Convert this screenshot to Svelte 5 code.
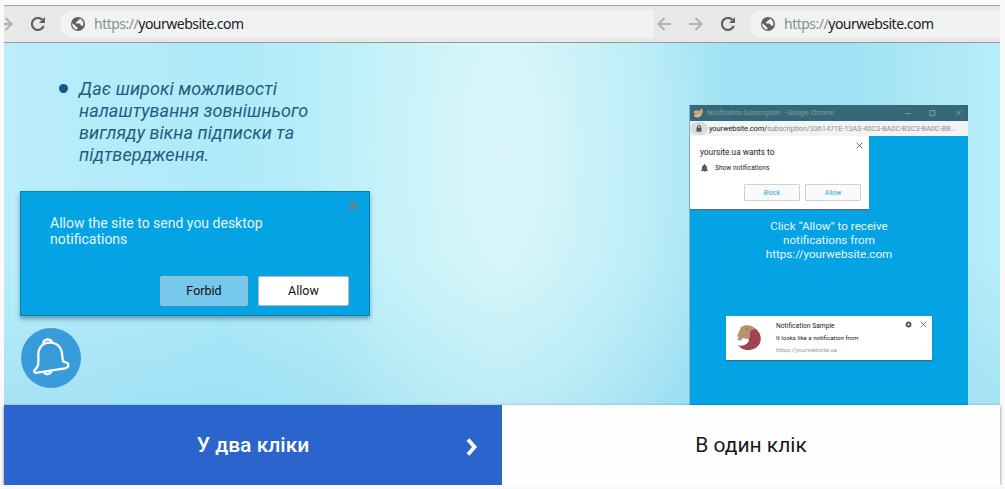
<script>
  const site = "yourwebsite.com";
  let active = "double";
</script>

<div class="widget">
  <div class="bar">
    {#each ["first", "second"] as name}
      <div class="nav {name}">
        {#if name === "second"}
          <svg class="arrow" viewBox="0 0 14 14"><path d="M14 7H1.5M7.5 1L1.5 7l6 6" /></svg>
        {/if}
        <svg class="arrow" viewBox="0 0 14 14"><path d="M0 7h12.5M6.5 1l6 6-6 6" /></svg>
        <svg class="reload" viewBox="0 0 14 14">
          <path d="M12.600 9A6 6 0 1 1 11.300 2.800" />
          <path class="solid" d="M14 0v6H8z" />
        </svg>
        <div class="address">
          <svg class="globe" viewBox="0 0 14 14">
            <circle cx="7" cy="7" r="7" />
            <path d="M8.500 1.500C8.700 3 8 3.300 6.500 3.400c0 1.300-.5 1.500-1.700 1.700-.1.900.2 1.300 1.200 1.300h2.300c1 .1 1.300.8 1.300 1.800.8.100 1.500.3 2 1 1.700-3 .4-6.500-3.100-7.700z" />
            <path d="M1.400 6.200l3.100 2.500c.4 1 .7 1.300 1.800 1.400v2.500C3 12.300.8 9.400 1.400 6.200z" />
          </svg>
          <span class="url"><i>https://</i>{site}</span>
        </div>
      </div>
    {/each}
  </div>

  <div class="stage">
    <div class="left">
      <ul>
        <li>
          Дає широкі можливості<br />налаштування зовнішнього<br />вигляду вікна підписки та<br
          />підтвердження.
        </li>
      </ul>
      <div class="prompt">
        <svg class="close" viewBox="0 0 10 10"><path d="M1 1l8 8M9 1L1 9" /></svg>
        <p>Allow the site to send you desktop<br />notifications</p>
        <div class="actions">
          <button class="forbid">Forbid</button>
          <button>Allow</button>
        </div>
      </div>
      <div class="bell">
        <svg viewBox="0 0 60 60">
          <path d="M15 40.500C13 42 12.500 44.700 15 44.800L44 40.300C48.500 39.500 48.200 35 44.500 34.400C41.500 33.900 41.500 31.500 41.300 28C40.800 20 36.500 14.700 29 14.700C21 14.700 17 20.200 17.300 28C17.500 33 18.300 38 15 40.500Z" />
          <path d="M22.300 15.600C21.500 10.500 31 10 31.300 15M22.800 43.800C24.500 47.500 29.500 46.500 30.500 42.700" />
        </svg>
      </div>
    </div>

    <div class="window">
      <div class="title">
        <svg class="logo" viewBox="0 0 10 10">
          <path d="M0 4l3-2 3 1 3-3 1 4-2 3-3 2-4-1 1-2z" fill="#cda27a" />
          <path d="M1 7l3 .5L9 5 8 8 5 9.500 2 9z" fill="#dfb893" />
        </svg>
        <span>Notification Subscription &nbsp;- Google Chrome</span>
        <svg class="controls" viewBox="0 0 60 8">
          <path d="M1 4.500h6M26 1.500h5v5h-5zM52 1.500l5 5M57 1.500l-5 5" />
        </svg>
      </div>
      <div class="location">
        <span class="lock">
          <svg viewBox="0 0 6 7"><path d="M1.500 3V2a1.500 1.500 0 0 1 3 0v1" /><rect x=".5" y="2.700" width="5" height="4" /></svg>
        </span>
        <span class="path"><b>{site}/</b>subscription/3361471E-13A3-40C3-BA0C-B3C3-BA0C-BB...</span>
      </div>
      <div class="page">
        <div class="permission">
          <svg class="close" viewBox="0 0 10 10"><path d="M1 1l8 8M9 1L1 9" /></svg>
          <h3>yoursite.ua wants to</h3>
          <div class="show">
            <svg viewBox="0 0 7 8"><path d="M3 0h1v1c1.500.4 2 1.500 2 3v1.500l1 1V7H0v-.5l1-1V4c0-1.500.5-2.600 2-3zM2.700 7.300h1.600c0 1-1.600 1-1.600 0z" /></svg>
            <span>Show notifications</span>
          </div>
          <div class="actions">
            <button>Block</button>
            <button>Allow</button>
          </div>
        </div>
        <p class="hint">Click “Allow” to receive<br />notifications from<br />https://{site}</p>
        <div class="sample">
          <svg class="lion" viewBox="0 0 26 27">
            <path d="M15 4l5 1c4 3 6 9 4 14-3 7-13 9-19 5l-3-3c5 2 10-1 11-5l-2-3z" fill="#a04350" />
            <path d="M5 3l5-2 6 1 4 3-5 1-1 3v5l-3 1-4-1-3 3-3-2 2-2-2-1 2-4z" fill="#b7926d" />
            <path d="M10 5.500h2" stroke="#8c5148" />
          </svg>
          <div class="message">
            <h4>Notification Sample</h4>
            <span>It looks like a notification from</span>
            <small>https://yourwebsite.ua</small>
          </div>
          <svg class="gear" viewBox="0 0 7 7"><circle cx="3.500" cy="3.500" r="2" /></svg>
          <svg class="close" viewBox="0 0 10 10"><path d="M1 1l8 8M9 1L1 9" /></svg>
        </div>
      </div>
    </div>
  </div>

  <div class="tabs">
    <div class="tab" class:active={active === "double"} on:click={() => (active = "double")}>
      <span>У два кліки</span>
      {#if active === "double"}
        <svg viewBox="0 0 12 18"><path d="M2 1.500l6.500 7.500L2 16.500" /></svg>
      {/if}
    </div>
    <div class="tab" class:active={active === "single"} on:click={() => (active = "single")}>
      <span>В один клік</span>
    </div>
  </div>
</div>

<style>
  :global(body) {
    background: #fafafa;
    font-family: Roboto, sans-serif;
    overflow: hidden;
  }
  :global(#app) {
    display: flow-root;
  }
  * {
    box-sizing: border-box;
  }
  p, h3, h4, ul {
    margin: 0;
    padding: 0;
    font-weight: 400;
  }
  svg {
    display: block;
    flex: none;
    fill: none;
  }
  button {
    font-family: inherit;
    padding: 0;
    white-space: nowrap;
  }
  .widget {
    width: 996px;
    margin: 5px 0 0 4px;
  }
  .bar {
    display: flex;
    height: 38px;
    background: #e8e8e8;
    border-top: 1px solid #a3a1a3;
    border-bottom: 1px solid #999799;
  }
  .nav {
    display: flex;
    align-items: center;
    overflow: hidden;
  }
  .first {
    width: 650px;
  }
  .first .arrow {
    margin-left: -5px;
  }
  .second {
    width: 346px;
    padding-left: 3px;
  }
  .arrow {
    width: 14px;
    height: 14px;
    margin-right: 18px;
    stroke: #a9b3af;
    stroke-width: 2;
  }
  .reload {
    width: 14px;
    height: 14px;
    margin-right: 15px;
    stroke: #5f6065;
    stroke-width: 2.2;
  }
  .reload .solid {
    fill: #5f6065;
    stroke: none;
  }
  .address {
    flex: 1;
    height: 28px;
    display: flex;
    align-items: center;
    padding-left: 11px;
    background: #f1f3f3;
    border-radius: 14px 0 0 14px;
  }
  .globe {
    width: 14px;
    height: 14px;
    margin-right: 9px;
  }
  .globe circle {
    fill: #5f6065;
  }
  .globe path {
    fill: #f1f3f3;
  }
  .url {
    margin-top: -1px;
    font-family: "Noto Sans", "Open Sans", sans-serif;
    font-size: 14px;
    letter-spacing: -0.5px;
    color: #1a2028;
  }
  .url i {
    font-style: normal;
    color: #84918f;
  }
  .stage {
    position: relative;
    display: flex;
    height: 362px;
    background:
      radial-gradient(ellipse 210px 400px at 505px 110px, rgba(225, 248, 251, 0.7), rgba(215, 247, 250, 0.45) 45%, transparent),
      linear-gradient(to bottom, transparent 60%, rgba(137, 212, 237, 0.4)),
      linear-gradient(to right, #bbedfa 0, #aeeafa 220px, #b8eef9 330px, #ccf3f8 500px, #b6eaf8 620px, #9fe2f4 730px, #a0e2f4 850px, #b9edfa 996px);
  }
  .left {
    width: 685px;
    padding: 35px 16px 0;
  }
  ul {
    list-style: none;
  }
  li {
    display: block;
    padding-left: 59px;
    font-size: 18px;
    line-height: 22px;
    letter-spacing: 0.07px;
    font-style: italic;
    color: #1f5d80;
  }
  li::before {
    content: "";
    float: left;
    width: 9px;
    height: 9px;
    margin: 6px 0 0 -20px;
    border-radius: 50%;
    background: #145981;
  }
  .prompt {
    position: relative;
    width: 350px;
    height: 125px;
    margin-top: 25px;
    padding: 23px 20px 0 29px;
    background: #03a3e4;
    border: 1px solid #087fae;
    box-shadow: 0 3px 4px rgba(40, 90, 110, 0.5);
    color: #e6f6fd;
    font-size: 14px;
    line-height: 16px;
  }
  .prompt .close {
    position: absolute;
    top: 8px;
    right: 10px;
    width: 11px;
    height: 11px;
    stroke: #817880;
    stroke-width: 1.8;
  }
  .actions {
    display: flex;
    justify-content: flex-end;
    gap: 10px;
  }
  .prompt .actions {
    margin-top: 29px;
  }
  .prompt button {
    width: 91px;
    height: 30px;
    padding-bottom: 1px;
    background: #fff;
    border: 1px solid #b5b9bc;
    border-radius: 2px;
    font-size: 12.5px;
    color: #180d12;
  }
  .prompt .forbid {
    width: 88px;
    background: #75c7eb;
  }
  .bell {
    width: 60px;
    height: 60px;
    margin: 12px 0 0 1px;
    border-radius: 50%;
    background: #399cda;
  }
  .bell path {
    stroke: #fff;
    stroke-width: 2.3;
    stroke-linejoin: round;
  }
  .window {
    width: 279px;
    height: 300px;
    margin-top: 62px;
    background: #03a3e4;
    border-left: 1px solid #7fb6c9;
    white-space: nowrap;
  }
  .title {
    display: flex;
    align-items: center;
    height: 16px;
    padding-left: 3px;
    background: #356977;
    font-size: 7px;
    letter-spacing: -0.14px;
    color: #8299a2;
  }
  .logo {
    width: 10px;
    height: 10px;
    margin-right: 4px;
  }
  .controls {
    width: 60px;
    height: 8px;
    margin-left: auto;
    margin-right: 4px;
    stroke: #8da6ae;
    stroke-width: 0.8;
  }
  .location {
    display: flex;
    align-items: center;
    height: 15px;
    background: #f2f3f3;
    font-size: 7.5px;
    letter-spacing: -0.14px;
    color: #8d9193;
  }
  .lock {
    display: flex;
    align-items: center;
    justify-content: center;
    width: 18px;
    height: 13px;
    margin-right: 1px;
    background: #dadcdc;
    border-radius: 7px;
  }
  .lock svg {
    width: 6px;
    height: 7px;
    stroke: #55555a;
  }
  .lock rect {
    fill: #55555a;
    stroke: none;
  }
  .location b {
    font-weight: 400;
    color: #222;
  }
  .permission {
    position: relative;
    width: 179px;
    height: 73px;
    padding: 11px 8px 0 10px;
    background: #fff;
    box-shadow: 0 1px 1px #516f7e;
    color: #222;
  }
  .permission .close {
    position: absolute;
    top: 6px;
    right: 6px;
    width: 7px;
    height: 7px;
    stroke: #666;
    stroke-width: 1.4;
  }
  h3 {
    font-size: 8.3px;
    line-height: 11px;
  }
  .show {
    display: flex;
    align-items: center;
    gap: 7px;
    height: 10px;
    margin-top: 5px;
    padding-left: 1px;
    font-size: 6.6px;
  }
  .show svg {
    width: 7px;
    height: 8px;
    fill: #5b5a61;
  }
  .permission .actions {
    gap: 5px;
    margin-top: 11px;
  }
  .permission button {
    width: 56px;
    height: 17px;
    background: #fafafa;
    border: 1px solid #cfd1d1;
    border-radius: 1px;
    font-size: 6.7px;
    color: #29a9dd;
  }
  .hint {
    margin-top: 10px;
    text-align: center;
    font-size: 11.65px;
    line-height: 14px;
    color: #e6f6fd;
  }
  .sample {
    display: flex;
    width: 206px;
    height: 44px;
    margin: 55px 0 0 36px;
    padding: 5px 5px 0 10px;
    background: #fff;
    box-shadow: 0 1px 1px #2f728f;
  }
  .lion {
    width: 26px;
    height: 27px;
    margin: 3px 14px 0 0;
  }
  .message {
    display: flex;
    flex-direction: column;
    flex: 1;
    color: #222;
    line-height: 10px;
    font-size: 6.15px;
  }
  h4 {
    margin-bottom: 2px;
    font-size: 6.7px;
    line-height: 10px;
  }
  small {
    margin-top: 2px;
    font-size: 6.1px;
    color: #999;
  }
  .gear {
    width: 7px;
    height: 7px;
    margin: 0 8px 0 0;
    stroke: #555;
    stroke-width: 1.9;
  }
  .sample .close {
    width: 7px;
    height: 7px;
    stroke: #666;
    stroke-width: 1.2;
  }
  .tabs {
    position: relative;
    display: flex;
    height: 80px;
    box-shadow: 0 1px 3px rgba(0, 0, 0, 0.5);
  }
  .tab {
    position: relative;
    display: flex;
    align-items: center;
    justify-content: center;
    width: 498px;
    background: #fefefe;
    color: #19171d;
    font-size: 21px;
    cursor: pointer;
  }
  .tab.active {
    background: #2b64cd;
    color: #fff;
    font-weight: 500;
  }
  .tab svg {
    position: absolute;
    right: 24px;
    top: 33px;
    width: 12px;
    height: 18px;
    stroke: #fff;
    stroke-width: 3.8;
  }
</style>
